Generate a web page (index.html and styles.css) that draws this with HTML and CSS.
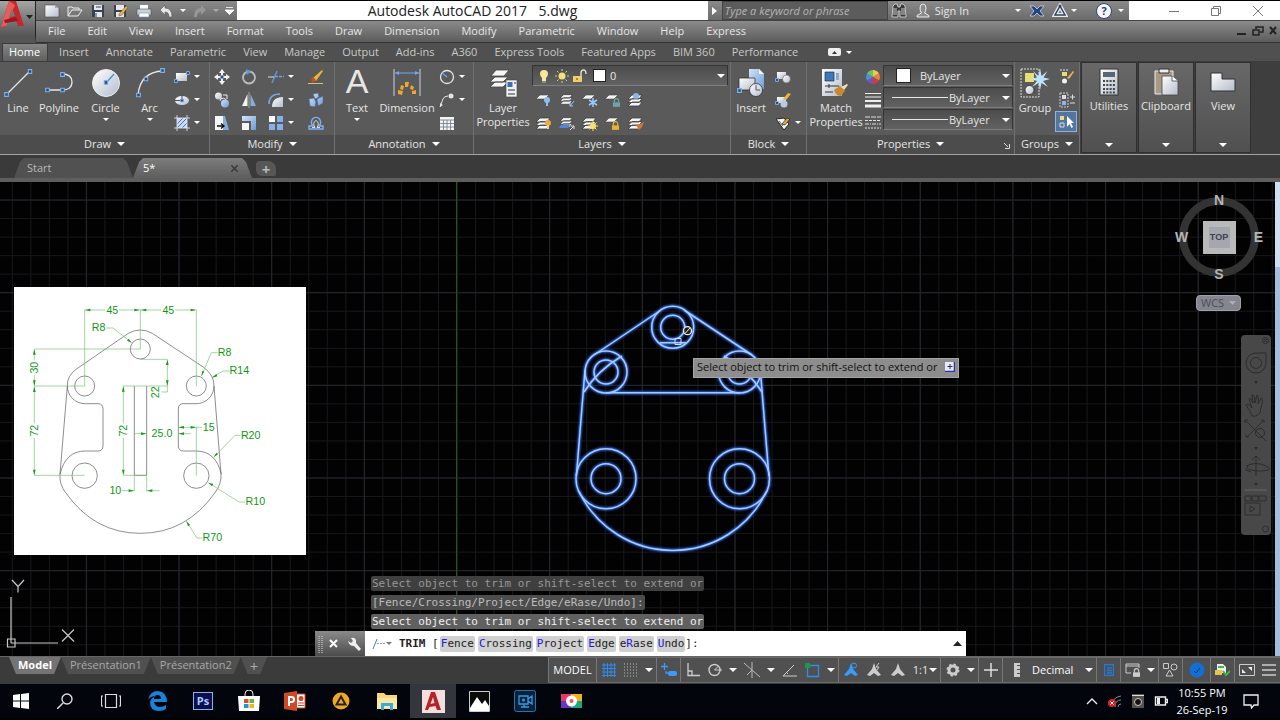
FILE: index.html
```
<!DOCTYPE html>
<html lang="en">
<head>
    <meta charset="UTF-8">
    <meta name="viewport" content="width=device-width, initial-scale=1.0">
    <title>Autodesk AutoCAD 2017 - 5.dwg</title>
    <link rel="stylesheet" href="styles.css">
</head>
<body>
    <!-- shared icon parts -->
    <svg class="defs" aria-hidden="true">
        <defs>
            <linearGradient id="metal" x1="0" y1="0" x2="1" y2="1">
                <stop offset="0" stop-color="#ffffff"/>
                <stop offset="1" stop-color="#b4bdcb"/>
            </linearGradient>
            <linearGradient id="blue" x1="0" y1="0" x2="1" y2="1">
                <stop offset="0" stop-color="#d3e4f8"/>
                <stop offset="1" stop-color="#6c9bd6"/>
            </linearGradient>
            <symbol id="node" viewBox="0 0 5 5"><path d="M.7 .7h3.6v3.6h-3.6z" fill="#33475f" stroke="#7cb0f5" stroke-width="1.2"/></symbol>
            <symbol id="stack" viewBox="0 0 18 16">
                <path d="M5 10h10l-3 4H1zM5 6.5h10l-3 4H1zM5 3h10l-3 4H1z" fill="#f4f4f4" stroke="#3c3c3c" stroke-width=".8"/>
            </symbol>
            <symbol id="sheet" viewBox="0 0 18 16"><path d="M5 3h9l-4 4H1z" fill="#f4f4f4" stroke="#444" stroke-width=".6"/></symbol>
            <symbol id="padlock" viewBox="0 0 8 10"><path d="M1.500 5V3a2.500 2.500 0 0 1 5 0v2" fill="none" stroke="currentColor" stroke-width="1.300"/><path d="M0 4.800h8V10H0z" fill="currentColor"/></symbol>
            <symbol id="person" viewBox="0 0 16 16"><path d="M8 1l2 6 5 6-3 1-4-3-4 3-3-1 5-6z" fill="currentColor"/></symbol>
        </defs>
    </svg>

    <header class="header">
        <button class="app-menu" aria-label="Application menu">
            <svg width="35" height="35" viewBox="0 0 35 35">
                <path d="M9 0h7l8 25h-6l-2-6-9 1-2 6H1z" fill="#c4272c"/>
                <path d="M9 0L1 26l5-1L15 4z" fill="#ef5a55"/>
                <path d="M12 7l3 8-6 1z" fill="#777"/>
                <path d="M4 19l12-3 2 4-13 2z" fill="#9b171d"/>
                <path d="M26 14h7l-3.500 4z" fill="#222"/>
            </svg>
        </button>
        <div class="titlebar">
            <div class="quick">
                <button aria-label="New"><svg width="16" height="14" viewBox="0 0 16 14"><path d="M1 1h10l4 3v9H1z" fill="url(#metal)" stroke="#444" stroke-width=".6"/><path d="M11 1v3h4" fill="#aaa"/></svg></button>
                <button aria-label="Open"><svg width="16" height="14" viewBox="0 0 16 14"><path d="M1 12V3h4l1 1h6v2" fill="#888" stroke="#eee"/><path d="M1 12l4-6h10l-4 6z" fill="#777" stroke="#eee"/></svg></button>
                <button aria-label="Save"><svg width="14" height="14" viewBox="0 0 14 14"><path d="M1 1h12v12H1z" fill="#39414d"/><path d="M3 1h8v5H3zM4 8h7v5H4z" fill="#e4e8ee"/><path d="M5 3h5M5 9v4" stroke="#39414d"/></svg></button>
                <button aria-label="Save as"><svg width="16" height="14" viewBox="0 0 16 14"><path d="M1 1h12v12H1z" fill="#39414d"/><path d="M3 1h8v5H3zM3 8h8v5H3z" fill="#e4e8ee"/><path d="M6 10l7-8 2 1-6 8-3 1z" fill="#e8b450" stroke="#6a4a20" stroke-width=".5"/></svg></button>
                <button aria-label="Plot"><svg width="16" height="14" viewBox="0 0 16 14"><path d="M4 1h8v5H4z" fill="#fff"/><path d="M1 5h14v6H1z" fill="#c9d2dc" stroke="#475462" stroke-width=".6"/><path d="M3 9h10v4H3z" fill="#fff" stroke="#6a8db5" stroke-width=".6"/></svg></button>
                <button aria-label="Undo"><svg width="15" height="14" viewBox="0 0 15 14"><path d="M6 1v3q7 0 7 9h-3q0-5-4-5v3L1 6z" fill="#e6e6e6" stroke="#555" stroke-width=".6"/></svg></button>
                <i class="arrow tiny"></i>
                <button aria-label="Redo"><svg width="15" height="14" viewBox="0 0 15 14"><path d="M9 1v3q-7 0-7 9h3q0-5 4-5v3l5-5z" fill="#969696"/></svg></button>
                <i class="arrow tiny dim"></i>
                <button class="narrow" aria-label="Customize"><svg width="9" height="10" viewBox="0 0 9 10"><path d="M1 1.500h7M0 4h9L4.500 8.500z" fill="#fff" stroke="#fff" stroke-width=".8"/></svg></button>
            </div>
            <h1 class="title">Autodesk AutoCAD 2017 <span>5.dwg</span></h1>
            <div class="infocenter">
                <button class="expand" aria-label="Collapse search"><svg width="5" height="8" viewBox="0 0 5 8"><path d="M0 0l5 4-5 4z" fill="#fff"/></svg></button>
                <input class="search" type="text" placeholder="Type a keyword or phrase" aria-label="Search help">
                <button aria-label="Search"><svg width="16" height="16" viewBox="0 0 16 16"><path d="M2 3l2-2h2l1 3h2l1-3h2l2 2 1 11H9V8H7v6H1z" fill="#3a3a3a" stroke="#ddd" stroke-width=".8"/><path d="M3 5v7M5 5v7M11 5v7M13 5v7" stroke="#ccc"/></svg></button>
                <button class="sign-in"><svg width="16" height="16" viewBox="0 0 16 16"><path d="M5 5q0-4 3-4t3 4q0 3-1.500 5l4.500 2.500V14H2v-1.500L6.500 10Q5 8 5 5z" fill="#8b8b8b" stroke="#eee"/></svg>Sign In</button>
                <i class="arrow tiny"></i>
                <button aria-label="Exchange apps"><svg width="16" height="14" viewBox="0 0 16 14"><path d="M1 2h4l3 3 3-3h4l-4 5 4 5h-4L8 9l-3 3H1l4-5z" fill="#25417f" stroke="#dce4f2" stroke-width=".7"/></svg></button>
                <button aria-label="Stay connected"><svg width="16" height="15" viewBox="0 0 16 15"><path d="M8 3l5 9H3z" fill="none" stroke="#e8edf5" stroke-width="4"/><path d="M8 3l5 9H3z" fill="none" stroke="#33415f" stroke-width="1.500"/><circle cx="8" cy="3" r="1.500" fill="#33415f"/></svg></button>
                <i class="arrow tiny"></i>
                <button class="help" aria-label="Help">?</button>
                <i class="arrow tiny"></i>
            </div>
            <div class="window-buttons">
                <button aria-label="Minimize"><svg width="10" height="10"><path d="M0 5.500h10" stroke="#777"/></svg></button>
                <button aria-label="Restore"><svg width="10" height="10"><path d="M.5 2.500h7v7h-7zM2.500 2V.5h7v7H8" fill="none" stroke="#777"/></svg></button>
                <button aria-label="Close"><svg width="10" height="10"><path d="M0 0l10 10M10 0L0 10" stroke="#777"/></svg></button>
            </div>
        </div>
        <nav class="menubar">
            <a href="#">File</a><a href="#">Edit</a><a href="#">View</a><a href="#">Insert</a><a href="#">Format</a><a href="#">Tools</a><a href="#">Draw</a><a href="#">Dimension</a><a href="#">Modify</a><a href="#">Parametric</a><a href="#">Window</a><a href="#">Help</a><a href="#">Express</a>
            <div class="doc-buttons">
                <button aria-label="Minimize drawing"><svg width="11" height="10"><path d="M1 8h9" stroke="#222" stroke-width="2"/></svg></button>
                <button aria-label="Restore drawing"><svg width="12" height="10"><path d="M1 4h6v5H1zM4 3V1h7v5H8" fill="none" stroke="#222" stroke-width="1.500"/></svg></button>
                <button aria-label="Close drawing"><svg width="9" height="9"><path d="M1 1l6 7M7 1L1 8" stroke="#222" stroke-width="2"/></svg></button>
            </div>
        </nav>
    </header>

    <nav class="ribbon-tabs">
        <a href="#" class="active">Home</a><a href="#">Insert</a><a href="#">Annotate</a><a href="#">Parametric</a><a href="#">View</a><a href="#">Manage</a><a href="#">Output</a><a href="#">Add-ins</a><a href="#">A360</a><a href="#">Express Tools</a><a href="#">Featured Apps</a><a href="#">BIM 360</a><a href="#">Performance</a>
        <button class="minimize" aria-label="Minimize ribbon"><svg width="13" height="8"><rect width="13" height="8" rx="2" fill="#eee"/><path d="M4 6h5L6.500 3z" fill="#333"/></svg><i class="arrow tiny"></i></button>
    </nav>

    <main class="ribbon">
        <section class="panel draw">
            <div class="tools">
                <button class="big"><svg width="30" height="30" viewBox="0 0 30 30"><path d="M4 26L27 3" stroke="#e6e6e6" stroke-width="1.300"/><use href="#node" x="1" y="24" width="5" height="5"/><use href="#node" x="24.500" y="1" width="5" height="5"/></svg>Line</button>
                <button class="big"><svg width="30" height="30" viewBox="0 0 30 30"><path d="M3 22h15q10 0 10-8t-10-8" fill="none" stroke="#e6e6e6" stroke-width="1.300"/><use href="#node" x="1" y="19.500" width="5" height="5"/><use href="#node" x="16" y="19.500" width="5" height="5"/><use href="#node" x="16" y="4" width="5" height="5"/></svg>Polyline</button>
                <button class="big"><svg width="30" height="30" viewBox="0 0 30 30"><circle cx="15" cy="15" r="13.500" fill="url(#metal)" stroke="#eee"/><path d="M15 15l8-9" stroke="#4f87cf" stroke-width="1.300"/><use href="#node" x="12.500" y="12" width="5" height="5"/></svg>Circle<i class="arrow tiny"></i></button>
                <button class="big"><svg width="30" height="30" viewBox="0 0 30 30"><path d="M3 27Q5 4 28 3" fill="none" stroke="#e6e6e6" stroke-width="1.300"/><use href="#node" x="1" y="24.500" width="5" height="5"/><use href="#node" x="8.500" y="8.500" width="5" height="5"/><use href="#node" x="25" y="0" width="5" height="5"/></svg>Arc<i class="arrow tiny"></i></button>
                <div class="small">
                    <button aria-label="Rectangle"><svg width="16" height="16" viewBox="0 0 16 16"><path d="M2 4h11v8H2z" fill="url(#metal)"/><use href="#node" x="0" y="10" width="4" height="4"/><use href="#node" x="12" y="2" width="4" height="4"/></svg><i class="arrow tiny"></i></button>
                    <button aria-label="Ellipse"><svg width="16" height="16" viewBox="0 0 16 16"><ellipse cx="8" cy="8.500" rx="7" ry="4.500" fill="url(#metal)"/><path d="M8 8.500V2M8 8.500H1" stroke="#456"/><use href="#node" x="6" y="6.500" width="4" height="4"/></svg><i class="arrow tiny"></i></button>
                    <button aria-label="Hatch"><svg width="16" height="16" viewBox="0 0 16 16"><path d="M3 3h10v10H3z" fill="#c9dbf3"/><path d="M3 9l6-6M3 13L13 3M8 13l5-5" stroke="#4675b4"/><path d="M3 0v16M13 0v16M0 3h16M0 13h16" stroke="#e9eef5" stroke-width=".8"/></svg><i class="arrow tiny"></i></button>
                </div>
            </div>
            <h2>Draw<i class="arrow"></i></h2>
        </section>

        <section class="panel modify">
            <div class="tools">
                <div class="small">
                    <button aria-label="Move"><svg width="16" height="16" viewBox="0 0 16 16"><path d="M8 0l3 4H9v2H7V4H5zM8 16l3-4H9v-2H7v2H5zM0 8l4-3v2h2v2H4v2zM16 8l-4-3v2h-2v2h2v2z" fill="#f2f2f2"/><use href="#node" x="6" y="6" width="4" height="4"/></svg></button>
                    <button aria-label="Copy"><svg width="16" height="16" viewBox="0 0 16 16"><circle cx="4.500" cy="4" r="3.500" fill="url(#metal)"/><path d="M6 9a3 3 0 1 1 2 3" stroke="#eee" fill="none"/><circle cx="11" cy="11.500" r="4" fill="url(#blue)"/><path d="M9 3h4v4" fill="none" stroke="#eee"/></svg></button>
                    <button aria-label="Stretch"><svg width="16" height="16" viewBox="0 0 16 16"><path d="M1 1h8v14H1z" fill="#f6f6f6"/><path d="M9 1h2l4 14H9z" fill="#86abd9"/><path d="M3 11h6M7 8.500l3 2.500-3 2.500" stroke="#111" stroke-width="1.400" fill="none"/></svg></button>
                </div>
                <div class="small">
                    <button aria-label="Rotate"><svg width="16" height="16" viewBox="0 0 16 16"><circle cx="8" cy="8.500" r="6" fill="none" stroke="#bcbcbc" stroke-width="1.800"/><path d="M5 0l5 2.500L6 6z" fill="#5e98e8"/></svg></button>
                    <button aria-label="Mirror"><svg width="16" height="16" viewBox="0 0 16 16"><path d="M6.500 2v12H1z" fill="#f4f4f4"/><path d="M9.500 2v12H15z" fill="#88add9"/><path d="M8 0v16" stroke="#ccc" stroke-width=".7"/></svg></button>
                    <button aria-label="Scale"><svg width="16" height="16" viewBox="0 0 16 16"><path d="M1 1h14v14H10V6H1z" fill="url(#blue)"/><path d="M1 8h7v7H1z" fill="#f6f6f6"/></svg></button>
                </div>
                <div class="small">
                    <button aria-label="Trim"><svg width="16" height="16" viewBox="0 0 16 16"><path d="M4 14L9 2" stroke="#5b95e4" stroke-width="1.500"/><path d="M0 8h6" stroke="#ddd"/><path d="M7 7.500h9" stroke="#6ea2ea" stroke-width="1.500" stroke-dasharray="3 1"/></svg><i class="arrow tiny"></i></button>
                    <button aria-label="Fillet"><svg width="16" height="16" viewBox="0 0 16 16"><path d="M4 15Q4 5 15 5v10z" fill="url(#metal)"/><path d="M1 12Q1 2 12 2" fill="none" stroke="#77a6e4" stroke-width="1.600"/></svg><i class="arrow tiny"></i></button>
                    <button aria-label="Array"><svg width="16" height="16" viewBox="0 0 16 16"><path d="M1 1h6v6H1z" fill="#fff"/><path d="M9 1h6v6H9zM1 9h6v6H1zM9 9h6v6H9z" fill="#85b1ea"/></svg><i class="arrow tiny"></i></button>
                </div>
                <div class="small">
                    <button aria-label="Erase"><svg width="16" height="16" viewBox="0 0 16 16"><path d="M5 9L14 1l1 1-7 10z" fill="#eeb339"/><path d="M3 11l2-3 3 3-3 3z" fill="#cb4d25"/><path d="M0 14.500h15" stroke="#d6c56c"/></svg></button>
                    <button aria-label="Explode"><svg width="16" height="16" viewBox="0 0 16 16"><path d="M5 2l5-1 1 4-4 2zM1 7l5-1 2 4-1 5-5-1zM9 7l6-3v7l-5 3z" fill="url(#blue)" stroke="#49688e" stroke-width=".6"/></svg></button>
                    <button aria-label="Offset"><svg width="16" height="16" viewBox="0 0 16 16"><path d="M1 14v-3h4q-3-3-.5-7a4.500 4.500 0 0 1 7 0q2.500 4-.5 7h4v3z" fill="none" stroke="#7eb1f2" stroke-width="1.400"/><path d="M4 12.500h3q-3-5 1-7 4 2 1 7h3" fill="none" stroke="#ddd"/></svg></button>
                </div>
            </div>
            <h2>Modify<i class="arrow"></i></h2>
        </section>

        <section class="panel annotation">
            <div class="tools">
                <button class="big"><span class="letter" aria-hidden="true">A</span>Text<i class="arrow tiny"></i></button>
                <button class="big"><svg width="30" height="30" viewBox="0 0 30 30"><path d="M2 1v27M28 1v27" stroke="#c9d3e0"/><path d="M3 5h24" stroke="#6ea6f2"/><path d="M3 5l4-2v4zM27 5l-4-2v4z" fill="#6ea6f2"/><g fill="#eda62f"><path d="M6 22l5 1-1 4-4-1zM9 17l3 1-1 4-3-1zM13 14h4l-1 5h-3zM19 17l3 2-1 3-3-1zM20 23l4-1v4h-4z"/></g></svg>Dimension</button>
                <div class="small">
                    <button aria-label="Radius"><svg width="16" height="16" viewBox="0 0 16 16"><circle cx="8" cy="8" r="6.500" fill="none" stroke="#e1e6ec" stroke-width="1.300"/><path d="M8 8L3 4" stroke="#6da3ee" stroke-width="1.500"/></svg><i class="arrow tiny"></i></button>
                    <button aria-label="Leader"><svg width="16" height="16" viewBox="0 0 16 16"><path d="M1 15l3-8q1-3 5-3" fill="none" stroke="#e1e6ec"/><circle cx="12" cy="4" r="2.500" fill="#e1e6ec"/><path d="M1 15v-4l3 2z" fill="#e1e6ec"/></svg><i class="arrow tiny"></i></button>
                    <button aria-label="Table"><svg width="16" height="16" viewBox="0 0 16 16"><path d="M1 2h14v13H1z" fill="#f4f4f4"/><path d="M1 5h14M1 8.500h14M1 12h14M4.500 5v10M8 5v10M11.500 5v10" stroke="#6d7785" stroke-width=".8"/></svg></button>
                </div>
            </div>
            <h2>Annotation<i class="arrow"></i></h2>
        </section>

        <section class="panel layers">
            <div class="tools">
                <button class="big"><svg width="30" height="30" viewBox="0 0 30 30"><path d="M7 14h13l-5 5H2zM7 9h13l-5 5H2zM8 2h13l-5 6H3z" fill="#f6f6f6" stroke="#444" stroke-width=".8"/><path d="M18 12h11v17H18z" fill="#f1f1f1" stroke="#444" stroke-width=".6"/><path d="M19.500 14h5v5h-5z" fill="#3a6fb5"/><path d="M26 15h2M20 22h7M20 26h7" stroke="#333"/></svg>Layer<br>Properties</button>
                <div class="layer-area">
                    <label class="combo">
                        <svg width="56" height="16" viewBox="0 0 56 16"><path d="M3 6a4 4 0 1 1 8 0q0 2-2 4v3H5v-3Q3 8 3 6z" fill="#f6e79a"/><path d="M5 14h4" stroke="#bbb"/><circle cx="25" cy="8" r="3.500" fill="#f5e07a"/><path d="M25 1v2M25 13v2M18 8h2M30 8h2M20 3l1.500 1.500M30 3l-1.500 1.500M20 13l1.500-1.500M30 13l-1.500-1.500" stroke="#d6cda5"/><path d="M36 8h9v6h-9z" fill="#f0cf68"/><path d="M44 8V5q0-3 2.500-3T49 6" fill="none" stroke="#ddd" stroke-width="1.400"/><path d="M40 10v2" stroke="#444"/></svg>
                        <span class="swatch"></span>
                        <select aria-label="Layer"><option>0</option></select><i class="arrow"></i>
                    </label>
                    <div class="layer-icons">
                        <button aria-label="Off"><svg width="18" height="16"><use href="#sheet" width="18" height="16"/><circle cx="12" cy="8" r="3" fill="#8cc0f0"/><path d="M12 10v4" stroke="#8cc0f0" stroke-width="2"/></svg></button>
                        <button aria-label="Isolate"><svg width="18" height="16"><use href="#stack" width="18" height="14"/><path d="M16 9l-4 5M12 11v3h3" stroke="#9cc4f5" fill="none"/></svg></button>
                        <button aria-label="Freeze"><svg width="18" height="16"><use href="#sheet" width="18" height="16"/><path d="M12 6v9M8 8l8 5M16 8l-8 5" stroke="#9ccaff" stroke-width="1.500"/></svg></button>
                        <button aria-label="Lock"><svg width="18" height="16" color="#6fa3a8"><use href="#sheet" width="18" height="16"/><use href="#padlock" x="9" y="6" width="7" height="9"/></svg></button>
                        <button aria-label="Make current"><svg width="18" height="16"><use href="#stack" width="18" height="16"/><circle cx="9" cy="4" r="3" fill="#8ab5ea"/></svg></button>
                        <button aria-label="Turn all on"><svg width="18" height="16"><use href="#stack" width="18" height="16"/><circle cx="13" cy="8" r="3" fill="#f2a93b"/><path d="M13 10v4" stroke="#f2d28e" stroke-width="2"/></svg></button>
                        <button aria-label="Unisolate"><svg width="18" height="16"><use href="#stack" width="18" height="14"/><path d="M3 10h9l-2 3H1z" fill="#4a88dd"/><path d="M12 15l4-4M13 11h3v3" stroke="#ddd" fill="none"/></svg></button>
                        <button aria-label="Thaw all"><svg width="18" height="16"><use href="#stack" width="18" height="16"/><circle cx="12" cy="11" r="3" fill="#f7e06d"/><path d="M12 6v10M7 11h10M8.500 7.500l7 7M15.500 7.500l-7 7" stroke="#f7e06d"/></svg></button>
                        <button aria-label="Unlock"><svg width="18" height="16" color="#e4b434"><use href="#sheet" width="18" height="16"/><use href="#padlock" x="8" y="6" width="7" height="9"/></svg></button>
                        <button aria-label="Match layer"><svg width="18" height="16"><use href="#stack" width="18" height="16"/><path d="M9 10l4-1 4-2-2 5-3 3z" fill="#ce7837"/></svg></button>
                    </div>
                </div>
            </div>
            <h2>Layers<i class="arrow"></i></h2>
        </section>

        <section class="panel block">
            <div class="tools">
                <button class="big"><svg width="30" height="30" viewBox="0 0 30 30"><path d="M13 1h10l5 5v15H13z" fill="url(#blue)"/><path d="M23 1v5h5" fill="#eef5ff"/><path d="M3 10h16v12H3z" fill="url(#metal)" stroke="#333" stroke-width=".8"/><circle cx="20" cy="22" r="6.500" fill="url(#metal)" stroke="#333" stroke-width=".8"/><path d="M20 22v-5M20 22h4" stroke="#556"/><use href="#node" x="1" y="20" width="5" height="5"/></svg>Insert</button>
                <div class="small">
                    <button aria-label="Create block"><svg width="16" height="16" viewBox="0 0 16 16"><path d="M2 3h9v7H2z" fill="url(#metal)"/><circle cx="11.500" cy="10" r="4" fill="url(#metal)" stroke="#555" stroke-width=".6"/><use href="#node" x="0" y="9" width="4" height="4"/></svg></button>
                    <button aria-label="Edit block"><svg width="16" height="16" viewBox="0 0 16 16"><path d="M2 5h9v6H2z" fill="url(#metal)"/><circle cx="9" cy="12" r="3.500" fill="#b9cbe2"/><path d="M8 7l5-6 3 1-5 6z" fill="#efb343"/><use href="#node" x="0" y="9" width="4" height="4"/></svg></button>
                    <button aria-label="Edit attributes"><svg width="16" height="16" viewBox="0 0 16 16"><path d="M1 4l8-1 5 6-5 6z" fill="#f4f4f4" stroke="#222"/><path d="M4 6l4 5M7 9l5-6 3 1-5 6z" stroke="#222" stroke-width=".7" fill="#e6a83e"/></svg><i class="arrow tiny"></i></button>
                </div>
            </div>
            <h2>Block<i class="arrow"></i></h2>
        </section>

        <section class="panel properties">
            <div class="tools">
                <button class="big"><svg width="30" height="30" viewBox="0 0 30 30"><path d="M1 1h20v27H1z" fill="url(#metal)"/><path d="M4 4h9v9H4z" fill="#3d77bd" stroke="#222" stroke-width=".6"/><path d="M15 5h3v7h-3z" fill="#89abd0"/><path d="M4 18h14M8 16v4M4 24h8" stroke="#333"/><path d="M13 22l6-4 5 5-4 5q-5 0-7-6z" fill="#c98634"/><path d="M20 19l6-3 1 1-4 5z" fill="#f0dfae"/></svg>Match<br>Properties</button>
                <div class="small prop-icons">
                    <svg width="16" height="16" viewBox="0 0 16 16"><path d="M8 8V1a7 7 0 0 1 6 3.500z" fill="#f2c84b"/><path d="M8 8l6-3.500a7 7 0 0 1 0 7z" fill="#e5853a"/><path d="M8 8l6 3.500A7 7 0 0 1 8 15z" fill="#cf3a44"/><path d="M8 8v7a7 7 0 0 1-6-3.500z" fill="#7c4fb5"/><path d="M8 8l-6 3.500a7 7 0 0 1 0-7z" fill="#4a8fe0"/><path d="M8 8L2 4.500A7 7 0 0 1 8 1z" fill="#6dc06d"/></svg>
                    <svg width="16" height="16" viewBox="0 0 16 16"><path d="M0 1.500h16M0 5h16" stroke="#eee"/><path d="M0 9h16" stroke="#eee" stroke-width="2"/><path d="M0 14h16" stroke="#eee" stroke-width="3"/></svg>
                    <svg width="16" height="16" viewBox="0 0 16 16"><path d="M0 2h16" stroke="#ddd" stroke-dasharray="5 1"/><path d="M0 5.500h16" stroke="#ddd" stroke-dasharray="3 1"/><path d="M0 9h16" stroke="#ddd" stroke-dasharray="4 1 1 1"/><path d="M0 13h16" stroke="#ddd" stroke-dasharray="2 1"/></svg>
                </div>
                <div class="combos">
                    <label class="combo"><span class="swatch"></span><select aria-label="Object color"><option>ByLayer</option></select><i class="arrow"></i></label>
                    <label class="combo"><span class="rule"></span><select aria-label="Lineweight"><option>ByLayer</option></select><i class="arrow"></i></label>
                    <label class="combo"><span class="rule"></span><select aria-label="Linetype"><option>ByLayer</option></select><i class="arrow"></i></label>
                </div>
            </div>
            <h2>Properties<i class="arrow"></i><svg class="launcher" width="6" height="6"><path d="M0 0l4 4M5.500 1v4.500H1" fill="none" stroke="#ddd"/></svg></h2>
        </section>

        <section class="panel groups">
            <div class="tools">
                <button class="big"><svg width="30" height="30" viewBox="0 0 30 30"><path d="M1 1h18v28H1z" fill="none" stroke="#ddd" stroke-dasharray="2 1"/><path d="M5 5h9v9H5z" fill="#e5df75"/><circle cx="9.500" cy="22" r="4.500" fill="url(#metal)" stroke="#222" stroke-width=".8"/><path d="M20 0l1.500 8 6-5-4 6.500L30 11l-7 2 5 6-6.500-4L20 22l-1.500-7-6.500 4 5-6-7-2 7-1.500L13 3l5.500 5z" fill="#bfe2fb"/></svg>Group</button>
                <div class="small">
                    <button aria-label="Ungroup"><svg width="16" height="16" viewBox="0 0 16 16"><path d="M1 1h9" stroke="#ddd" stroke-dasharray="2 1"/><path d="M3 3h5v4H3z" fill="#e5df75"/><circle cx="5.500" cy="12" r="2.500" fill="#f1f1f1"/><path d="M8 9l6-7 1 1-5 7z" fill="#e7b653"/></svg></button>
                    <button aria-label="Group edit"><svg width="16" height="16" viewBox="0 0 16 16"><path d="M1 1h8v14H1z" fill="none" stroke="#ccc" stroke-dasharray="2 1"/><path d="M3 3h4v4H3z" fill="#ddd"/><path d="M3 9h4v4H3z" fill="#8cb4e8"/><path d="M11 5h5M13.500 2.500v5M11 11h5" stroke="#ddd"/></svg></button>
                    <button class="on" aria-label="Group selection"><svg width="16" height="16" viewBox="0 0 16 16"><path d="M2 2h4v4H2z" fill="#e5df75"/><path d="M2 9h4v4H2z" fill="none" stroke="#ddd"/><path d="M9 2v11l2.500-3 2 4 1.500-1-2-4h3z" fill="#fff"/></svg></button>
                </div>
            </div>
            <h2>Groups<i class="arrow"></i></h2>
        </section>

        <button class="folded"><svg width="28" height="28" viewBox="0 0 28 28"><path d="M5 1h18v26H5z" fill="url(#metal)" stroke="#333"/><path d="M8 4h12v5H8z" fill="#596675"/><path d="M8 13h12M8 17h12M8 21h12M8 24.500h12" stroke="#444" stroke-width="2" stroke-dasharray="2 1.300"/></svg>Utilities<i class="arrow"></i></button>
        <button class="folded"><svg width="28" height="28" viewBox="0 0 28 28"><path d="M3 3h18v23H3z" fill="#a99a86" stroke="#eee"/><path d="M7 1h10v4H7z" fill="#eee" stroke="#333"/><path d="M10 8h10l6 5v14H10z" fill="url(#metal)" stroke="#444" stroke-width=".8"/><path d="M20 8v5h6" fill="#fff" stroke="#444" stroke-width=".8"/></svg>Clipboard<i class="arrow"></i></button>
        <button class="folded"><svg width="28" height="28" viewBox="0 0 28 28"><path d="M2 5h11v6h13v12H2z" fill="url(#metal)" stroke="#333"/></svg>View<i class="arrow"></i></button>
    </main>

    <nav class="doc-tabs">
        <a href="#" class="doc-tab">Start</a>
        <a href="#" class="doc-tab current">5*<svg width="7" height="7"><path d="M0 0l7 7M7 0L0 7" stroke="#3b3b3b" stroke-width="1.500"/></svg></a>
        <button class="add" aria-label="New drawing">+</button>
    </nav>

    <section class="canvas">
        <svg class="drawing" viewBox="0 182 1280 474" preserveAspectRatio="xMinYMin slice">
            <defs>
                <pattern id="minor" x="456.500" y="292.200" width="18.530" height="18.530" patternUnits="userSpaceOnUse"><path d="M0 .5h19M.5 0v19" stroke="#16171b" fill="none"/></pattern>
                <pattern id="major" x="456.500" y="292.200" width="92.650" height="92.650" patternUnits="userSpaceOnUse"><path d="M0 .5h93M.5 0v93" stroke="#25272d" fill="none"/></pattern>
            </defs>
            <rect y="182" width="1280" height="474" fill="url(#minor)"/>
            <rect y="182" width="1280" height="474" fill="url(#major)"/>
            <path d="M456.500 182v474" stroke="#24532a"/>

            <g class="shape">
                <circle cx="672.700" cy="327.300" r="21"/><circle cx="672.700" cy="327.300" r="12"/>
                <circle cx="606" cy="372" r="21"/><circle cx="606" cy="372" r="12"/>
                <circle cx="739.500" cy="372" r="21"/><circle cx="739.500" cy="372" r="12"/>
                <circle cx="606" cy="478.700" r="30"/><circle cx="606" cy="478.700" r="15"/>
                <circle cx="739.500" cy="478.700" r="30"/><circle cx="739.500" cy="478.700" r="15"/>
                <path d="M661 310L594 355M684 310l68 45M585 370l-8.600 106M760.300 370l8.600 106"/>
                <path d="M579 491.500A104 104 0 0 0 766.500 491.500"/>
                <path d="M606 392.700h134M660 342.700h26"/>
                <path d="M622 356Q598 370 584 392M724 356q24 14 38 36"/>
            </g>
            <path d="M675 338.500h6v6h-6z" class="pick"/>
            <circle cx="687.500" cy="330.700" r="4" class="forbid"/><path d="M690 328l-5 5.500" stroke="#f6f3d8"/>

            <g class="ucs">
                <path d="M7.500 639h7.500v8H7.500zM11 643V597M11 643h47"/>
                <path d="M12 580l6 6.500 6-6.500M18 586.500v6M62 629.500l12 12M74 629.500l-12 12"/>
            </g>
        </svg>

        <!-- dimensioned sketch -->
        <svg class="sketch" viewBox="43 19 876 804">
            <g class="outline">
                <path d="M386 158Q422 138 458 158L612 260Q644 284 643 316L664 580Q666 610 646 636Q560 758 422 758T198 636Q178 610 181 580L203 316Q202 284 232 264z"/>
                <circle cx="422" cy="205" r="30"/><circle cx="255" cy="316" r="30"/><circle cx="590" cy="316" r="30"/>
                <circle cx="255" cy="585" r="38"/><circle cx="590" cy="585" r="38"/>
                <path d="M203 316a53 53 0 0 0 54 53h38q15 0 15 16v110q0 16-15 16h-38q-60 0-76 70"/>
                <path d="M643 316a53 53 0 0 1-54 53h-38q-15 0-15 16v110q0 16 15 16h38q60 0 76 70"/>
                <path d="M404 316v268M441 316v268M404 584h37"/>
            </g>
            <g class="dims">
                <path d="M255 88h62M358 88h127M526 88h64M255 88v228M422 88v117M590 88v228M104 205h318M104 316h151M104 584h151M104 205v34M104 282v34M104 316v112M104 472v112"/>
                <path d="M371 316v112M371 472v112M371 316h132M371 584h70M404 584v48M441 584v48M366 630h38M441 630h38M422 236h81v80M503 316v18h-18M404 459h37M536 440h72M536 459h38M590 440v145"/>
                <path d="M320 142h20l56 44M654 216h-19l-30 70M690 271h-20l-33 20M722 464h-16l-64 66M736 664h-18l-92-58M608 772h-16l-32-50"/>
            </g>
            <g class="heads">
                <path d="M256 88l16-4v8zM420 88l-16-4v8zM424 88l16-4v8zM589 88l-16-4v8zM104 206l-4 16h8zM104 315l-4-16h8zM104 318l-4 16h8zM104 583l-4-16h8zM371 317l-4 16h8zM371 583l-4-16h8zM503 237l-4 16h8zM503 315l-4-16h8z"/>
                <path d="M403 630l-16-4v8zM442 630l16-4v8zM440 459l-16-4v8zM537 440l16-4v8zM589 440l-16-4v8zM537 459l16-4v8zM396 186l-9-12-5 6zM605 286l3-16 6 3zM637 291l13-11 3 7zM642 530l8-14 5 5zM626 606l15 4-4 7zM560 722l11 10-6 5z"/>
            </g>
            <g class="labels">
                <text x="338" y="99">45</text><text x="506" y="99">45</text><text x="297" y="152">R8</text><text x="675" y="226">R8</text>
                <text x="719" y="281">R14</text><text x="627" y="450">15</text><text x="487" y="470">25.0</text><text x="753" y="475">R20</text>
                <text x="347" y="641">10</text><text x="767" y="674">R10</text><text x="638" y="782">R70</text>
                <text transform="translate(115 261) rotate(-90)">30</text><text transform="translate(115 450) rotate(-90)">72</text>
                <text transform="translate(382 450) rotate(-90)">72</text><text transform="translate(479 335) rotate(-90)">22</text>
            </g>
        </svg>

        <div class="prompt">Select object to trim or shift-select to extend or <svg width="10" height="10"><path d="M0 0h10v10H0z" fill="#e8e8ff"/><path d="M9.500 0v9.500H0" stroke="#2633b8" stroke-width="1.500" fill="none"/><path d="M5 2v5M2.500 4.500h5" stroke="#333"/></svg></div>

        <div class="viewcube">
            <span class="north">N</span><span class="west">W</span><button class="top">TOP</button><span class="east">E</span><span class="south">S</span>
        </div>
        <button class="wcs">WCS <svg width="7" height="5"><path d="M0 0h7L3.500 4z" fill="#aeaebc"/></svg></button>
        <div class="navbar">
            <svg width="30" height="200" viewBox="0 0 30 200">
                <g fill="none" stroke="#2c2c2c" stroke-width="1">
                    <circle cx="24.500" cy="5.500" r="3"/><path d="M23 4l3 3M26 4l-3 3"/>
                    <path d="M5 28a10 10 0 1 0 20 0V18H15a10 10 0 0 0-10 10z"/><circle cx="15" cy="28" r="5.500"/>
                    <path d="M9 76q-5-6-3-7t5 4l-3-9q2-2 4 4l-1-8q3-1 3 8l2-8q2 0 1 9l3-6q2 0 1 5l-2 10-4 3H11z"/>
                    <path d="M5 86l20 20M22 86L6 102M4 88v-3h3M20 85h3v3M5 99v3h3"/><circle cx="19" cy="98" r="4.500"/>
                    <path d="M15 121v20M5 131q10-5 20 0t-10 5l-8-2M11 125l4-4 4 4M7 131l-2 4 5 2"/>
                    <path d="M4 161h6v5H4zM11 161h6v5h-6zM18 161h7v5h-7zM4 168h15v12H4zM9 171v6l5-3z"/><circle cx="24.500" cy="194" r="3"/>
                </g>
                <path d="M13 46h4l-2 3zM13 112h4l-2 3zM13 148h4l-2 3z" fill="#2c2c2c"/><path d="M4 155h22" stroke="#666"/>
            </svg>
        </div>
        <div class="scrollbar"></div>

        <div class="command">
            <div class="history">
                <p class="old">Select object to trim or shift-select to extend or</p>
                <p class="mid">[Fence/Crossing/Project/Edge/eRase/Undo]:</p>
                <p>Select object to trim or shift-select to extend or</p>
            </div>
            <form class="cmdline">
                <div class="grip">
                    <svg width="5" height="18"><path d="M1 1v17M4 1v17" stroke="#ddd" stroke-dasharray="1 1"/></svg>
                    <button type="button" aria-label="Close command line"><svg width="9" height="9"><path d="M1 1l7 7M8 1L1 8" stroke="#fff" stroke-width="2"/></svg></button>
                    <button type="button" aria-label="Customize command line"><svg width="14" height="14" viewBox="0 0 14 14"><path d="M1 4l3 2 2-2-2-3q4-1 5 2v3l5 6-2 2-5-5Q2 9 1 4z" fill="#eee"/></svg></button>
                </div>
                <svg class="cmd-icon" width="20" height="12" viewBox="0 0 20 12"><path d="M1 11L5 1" stroke="#4a7fc8"/><path d="M5 5.500h8" stroke="#7ea4d4" stroke-dasharray="2 1"/><path d="M14 4h6l-3 3z" fill="#777"/></svg>
                <label for="cmd"><b>TRIM</b> [</label>
                <div class="options"><button type="button"><b>F</b>ence</button><button type="button"><b>C</b>rossing</button><button type="button"><b>P</b>roject</button><button type="button"><b>E</b>dge</button><button type="button">e<b>R</b>ase</button><button type="button"><b>U</b>ndo</button></div>
                <span>]:</span>
                <input id="cmd" type="text">
                <svg class="up" width="9" height="5"><path d="M0 5h9L4.500 0z" fill="#222"/></svg>
            </form>
        </div>
    </section>

    <footer class="bottombar">
        <nav class="layouts">
            <a href="#" class="current">Model</a><a href="#">Présentation1</a><a href="#">Présentation2</a><button aria-label="New layout">+</button>
        </nav>
        <div class="status">
            <button class="model">MODEL</button>
            <button class="first" aria-label="Grid"><svg width="14" height="14"><path d="M2 0v14M5.500 0v14M9 0v14M12.500 0v14M0 2h14M0 5.500h14M0 9h14M0 12.500h14" stroke="#2c8df0"/></svg></button>
            <button class="s" aria-label="Snap"><svg width="14" height="14"><path d="M0 1h14M0 4h14M0 7h14M0 10h14M0 13h14" stroke="#bbb" stroke-dasharray="1 2"/></svg></button>
            <button class="drop" aria-label="Snap options"><i class="arrow"></i></button>
            <button class="first" aria-label="Infer constraints"><svg width="16" height="14"><path d="M3.500 0v7M0 3.500h7M5 8v2h2" stroke="#3b9bf8" stroke-width="1.300" fill="none"/><rect x="7" y="8" width="9" height="5" rx="2" fill="#3b9bf8"/></svg></button>
            <button class="first" aria-label="Ortho"><svg width="14" height="14"><path d="M2 0v12.500h12M2 8h4v4" stroke="#ccc" fill="none" stroke-width="1.300"/></svg></button>
            <button class="s" aria-label="Polar"><svg width="14" height="14"><circle cx="6.500" cy="7" r="5.500" stroke="#ccc" fill="none" stroke-width="1.400"/><path d="M6.500 7H14M6.500 7l4-4" stroke="#ccc"/></svg></button>
            <button class="drop" aria-label="Polar options"><i class="arrow"></i></button>
            <button aria-label="Isodraft"><svg width="16" height="16"><path d="M0 1l16 14M8 0v16M3 13l5-5" stroke="#bbb"/></svg></button>
            <button class="drop" aria-label="Isodraft options"><i class="arrow"></i></button>
            <button class="s" aria-label="Object tracking"><svg width="15" height="13"><path d="M1 12L12 1M1 12h14M4 8l2 2" stroke="#ccc"/></svg></button>
            <button aria-label="Object snap"><svg width="15" height="15"><path d="M2.500 2.500h11v11h-11z" fill="none" stroke="#2c8df0" stroke-width="1.300"/><path d="M0 0h5v5H0z" fill="#1b9c3c"/></svg></button>
            <button class="drop" aria-label="Object snap options"><i class="arrow"></i></button>
            <button class="first" aria-label="Annotation visibility"><svg width="16" height="16" color="#379bff"><use href="#person" width="16" height="16"/><circle cx="11" cy="3.500" r="2.500" fill="none" stroke="#379bff"/></svg></button>
            <button aria-label="Auto scale"><svg width="16" height="16" color="#ccc"><use href="#person" width="16" height="16"/><path d="M13 1l-3 4h3l-2 3" stroke="#ccc" fill="none"/></svg></button>
            <button aria-label="Annotation scale"><svg width="16" height="16" color="#ccc"><use href="#person" width="16" height="16"/></svg></button>
            <button class="scale">1:1<i class="arrow"></i></button>
            <button class="first" aria-label="Workspace"><svg width="14" height="14"><circle cx="7" cy="7" r="4" fill="none" stroke="#ccc" stroke-width="3"/><circle cx="7" cy="7" r="5.500" fill="none" stroke="#ccc" stroke-width="2" stroke-dasharray="2.200 2.100"/></svg></button>
            <button class="drop" aria-label="Workspace options"><i class="arrow"></i></button>
            <button class="first" aria-label="Annotation monitor"><svg width="14" height="14"><path d="M7 0v14M0 7h14" stroke="#ddd" stroke-width="1.500"/></svg></button>
            <button class="first l" aria-label="Units"><svg width="6" height="14"><path d="M0 0h6v2H3v1h3v3H3v1h3v3H3v1h3v3H0z" fill="#ccc"/></svg></button>
            <label class="units"><select aria-label="Drawing units"><option>Decimal</option></select><i class="arrow"></i></label>
            <button class="first" aria-label="Quick properties"><svg width="10" height="12"><path d="M.5 .5h9v11h-9zM3 4h5M3 6.500h5M3 9h5" stroke="#2378d8" fill="none" stroke-width="1.300"/></svg></button>
            <button class="first" aria-label="Lock UI"><svg width="16" height="14" color="#ccc"><path d="M6 10H1V1h13v4M1 3h13" stroke="#ccc" fill="none"/><use href="#padlock" x="8" y="5" width="7" height="9"/></svg></button>
            <button class="drop" aria-label="Lock UI options"><i class="arrow"></i></button>
            <button class="first" aria-label="Isolate objects"><svg width="15" height="14"><path d="M.5 .5h5v5h-5zM3 13l3.500-6 3.500 6z" stroke="#ccc" fill="none"/><circle cx="11" cy="4" r="3" stroke="#ccc" fill="none"/></svg></button>
            <button class="first l" aria-label="Hardware acceleration"><svg width="16" height="16"><circle cx="8" cy="8" r="7.500" fill="#126fd6"/><path d="M5 9l2 2 4-5" stroke="#06315f" fill="none"/></svg></button>
            <button class="first" aria-label="Trusted DWG"><svg width="15" height="14"><path d="M2 1h6l3 3v6H2z" fill="#e7f1fb"/><path d="M0 7h7v5H0z" fill="#e6c54a"/><path d="M8 8l3 4 4-4M3 4h6" stroke="#4ab43f" stroke-width="2" fill="none"/></svg></button>
            <button class="first" aria-label="Clean screen"><svg width="16" height="12"><path d="M.5 .5h15v11H.5z" stroke="#ccc" fill="none"/><path d="M3 9V5l4 4zM13 3v4L9 3z" fill="#eee"/></svg></button>
            <button class="s" aria-label="Customization"><svg width="14" height="12"><path d="M0 1h14M0 6h14M0 11h14" stroke="#ccc" stroke-width="1.500"/></svg></button>
        </div>
    </footer>

    <div class="taskbar">
        <button class="start" aria-label="Start"><svg width="16" height="16"><path d="M0 2l7-1v6.500H0zM8 1l8-1v7.500H8zM0 8.500h7V15l-7-1zM8 8.500h8V16l-8-1z" fill="#fff"/></svg></button>
        <button aria-label="Search"><svg width="16" height="16"><circle cx="10" cy="6" r="5" fill="none" stroke="#ddd" stroke-width="1.400"/><path d="M6 10l-6 6" stroke="#ddd" stroke-width="1.500"/></svg></button>
        <button aria-label="Task view"><svg width="20" height="16"><path d="M4.500 1.500h11v13h-11zM2 3H.5v10H2M18 3h1.500v10H18" fill="none" stroke="#ddd" stroke-width="1.200"/></svg></button>
        <button aria-label="Edge"><svg width="20" height="20" viewBox="0 0 20 20"><path d="M1 9Q3 0 11 0q9 1 9 11H7q1 5 6 5 3 0 6-2v4q-3 2-7 2-9 0-9-9 1-4 6-6-6 0-8 4zM7 8h7q0-4-3.500-4T7 8z" fill="#1683dd" fill-rule="evenodd"/></svg></button>
        <button aria-label="Photoshop"><span class="ps">Ps</span></button>
        <button aria-label="Store"><svg width="22" height="22" viewBox="0 0 22 22"><path d="M7 7V4a4 4 0 0 1 8 0v3" stroke="#eee" fill="none"/><path d="M0 6h22l-1 15H1z" fill="#fff"/><path d="M6 9h4.500v4H6z" fill="#e34c26"/><path d="M11.500 9H16v4h-4.500z" fill="#6cb33e"/><path d="M6 14h4.500v4H6z" fill="#1c9ad6"/><path d="M11.500 14H16v4h-4.500z" fill="#f3b51b"/></svg></button>
        <button aria-label="PowerPoint"><svg width="22" height="20" viewBox="0 0 22 20"><path d="M12 3h9v14h-9z" fill="#fff" stroke="#cf4526"/><path d="M14 12h6M14 14.500h6" stroke="#cf4526"/><circle cx="17" cy="7.500" r="2.500" fill="#cf4526"/><path d="M0 2l13-2v20L0 18z" fill="#d24726"/><path d="M5 15V6h2.500a2.500 2.500 0 0 1 0 5H5" fill="none" stroke="#fff" stroke-width="2"/></svg></button>
        <button aria-label="AIMP"><svg width="18" height="18"><circle cx="9" cy="9" r="8.500" fill="#f0a722"/><path d="M9 4.500l4.500 8h-9z" fill="none" stroke="#222" stroke-width="2"/></svg></button>
        <button aria-label="File Explorer"><svg width="20" height="18"><path d="M0 1h7l2 2h11v14H0z" fill="#f5d879"/><path d="M0 6h20v11H0z" fill="#fbe7a1"/><path d="M4 18v-7h12v7h-3v-4H7v4z" fill="#3aa9dc"/></svg></button>
        <button class="running" aria-label="AutoCAD"><svg width="23" height="23" viewBox="0 0 23 23"><path d="M0 0h23v23H0z" fill="#f3dfdd"/><path d="M9 2h4l6 18h-4l-1.500-4-6 1L6 20H3zM11 7l-2.500 7 4-1z" fill="#b52228" fill-rule="evenodd"/></svg></button>
        <button aria-label="Photos"><svg width="21" height="21"><path d="M.5 .5h20v20H.5z" fill="#0a0a0a" stroke="#ccc"/><path d="M1 17l7-11 5 7 3-4 4 6v5H1z" fill="#fff"/></svg></button>
        <button aria-label="Recorder"><svg width="22" height="22"><rect x=".5" y=".5" width="21" height="21" rx="2" fill="#0b2036" stroke="#1f76b5"/><path d="M5 6h9v8H5zM14 9l4-3v8l-4-3M7 17h8M10 14v3" stroke="#2f9de8" fill="none" stroke-width="1.300"/><circle cx="9.500" cy="10" r="1.500" fill="#2f9de8"/></svg></button>
        <button aria-label="Screen recorder"><svg width="21" height="14"><path d="M0 0h10v7H0z" fill="#e9376a"/><path d="M10 0h11v7H10z" fill="#f2b01f"/><path d="M0 7h10v7H0z" fill="#6338c6"/><path d="M10 7h11v7H10z" fill="#19a982"/><circle cx="10.500" cy="7" r="5.500" fill="#fff"/><circle cx="10.500" cy="7" r="2" fill="#e9546a"/></svg></button>
        <div class="tray">
            <button aria-label="Show hidden icons"><svg width="12" height="8"><path d="M1 7l5-5 5 5" stroke="#eee" fill="none" stroke-width="1.300"/></svg></button>
            <button aria-label="Network"><svg width="14" height="14"><path d="M4 13Q4 3 13 2M7 13q0-7 6-7M10 13q0-3 3-3" stroke="#888" fill="none"/><circle cx="4" cy="9" r="4" fill="#d9232b"/><path d="M2.500 7.500l3 3M5.500 7.500l-3 3" stroke="#fff"/></svg></button>
            <button aria-label="Audio"><svg width="12" height="14"><path d="M0 0h12v14H0z" fill="#56524e"/><path d="M0 1.500h12" stroke="#ddd"/><circle cx="6" cy="8" r="3.500" fill="#111" stroke="#ccc"/></svg></button>
            <button aria-label="Battery"><svg width="14" height="10"><path d="M1.500 1h10v8h-10zM12 3.500h1.500v3H12" stroke="#eee" fill="none" stroke-width="1.400"/><path d="M3 2h3v6H3z" fill="#eee"/></svg></button>
            <button class="clock">10:55 PM<br>26-Sep-19</button>
            <button class="notify" aria-label="Notifications"><svg width="16" height="15"><path d="M1 1h14v10h-4l-2.500 3L8 11H1z" stroke="#eee" fill="none" stroke-width="1.300"/></svg></button>
        </div>
    </div>
</body>
</html>
```
FILE: styles.css
```
* {
    box-sizing: border-box;
}

body {
    margin: 0;
    height: 100vh;
    display: flex;
    flex-direction: column;
    overflow: hidden;
    font-family: "Open Sans", "Noto Sans", sans-serif;
    font-size: 11px;
    line-height: 14px;
    color: #e6e6e6;
    background: #3b3b3b;
}

button,
input,
select {
    font: inherit;
    color: inherit;
    background: none;
    border: 0;
    padding: 0;
    margin: 0;
    outline: none;
}

select {
    appearance: none;
}

a {
    color: inherit;
    text-decoration: none;
}

svg {
    display: block;
    flex: none;
}

.defs {
    position: absolute;
    width: 0;
    height: 0;
}

.arrow {
    display: inline-block;
    flex: none;
    border: 4px solid transparent;
    border-top-color: #fff;
    border-bottom: 0;
}

.arrow.tiny {
    border-width: 3px;
    border-bottom: 0;
}

.arrow.dim {
    border-top-color: #aaa;
}

/* title and menu */
.header {
    display: grid;
    grid-template-columns: 36px 1fr;
    grid-template-rows: 20px 22px;
    border-top: 1px solid #000;
}

.app-menu {
    grid-row: span 2;
    display: flex;
    align-items: flex-start;
    background: linear-gradient(#a5a5a5, #555);
    border-right: 1px solid #222;
    border-bottom: 7px solid #555;
    overflow: hidden;
}

.titlebar {
    display: flex;
    background: #fff;
    border-bottom: 1px solid #444;
}

.quick,
.infocenter {
    display: flex;
    align-items: center;
    background: linear-gradient(#8a8a8a, #6b6b6b);
}

.quick {
    width: 201px;
    padding-left: 4px;
}

.quick button {
    width: 23px;
    display: flex;
    justify-content: center;
}

.quick .arrow {
    margin: 0 2px;
}

.quick .narrow {
    width: 16px;
}

.title {
    flex: 1;
    margin: 0;
    text-align: center;
    font-size: 14px;
    line-height: 19px;
    font-weight: 400;
    color: #222;
}

.title span {
    margin-left: 8px;
}

.infocenter {
    width: 421px;
}

.infocenter button {
    width: 23px;
    display: flex;
    justify-content: center;
    align-items: center;
}

.infocenter .expand {
    width: 14px;
}

.search {
    width: 168px;
    height: 19px;
    padding: 0 2px;
    background: #5c5c5c;
    border: 1px solid #444;
    font-style: italic;
}

.search::placeholder {
    color: #b5b5b5;
}

.infocenter .sign-in {
    width: 102px;
    padding-left: 4px;
    margin-right: 3px;
    justify-content: flex-start;
    gap: 4px;
}

.infocenter .arrow {
    margin-right: 5px;
}

.infocenter .help {
    width: 16px;
    height: 16px;
    margin: 0 6px 0 14px;
    border-radius: 8px;
    background: #f5f7fa;
    border: 1px solid #35456a;
    color: #24407c;
    font-weight: 700;
}

.window-buttons {
    display: flex;
    width: 151px;
    padding-left: 24px;
}

.window-buttons button {
    width: 42px;
    display: flex;
    align-items: center;
    justify-content: center;
}

.menubar {
    display: flex;
    align-items: center;
    gap: 22px;
    padding: 0 2px 2px 12px;
    background: linear-gradient(#8a8a8a, #5c5c5c);
    border-bottom: 1px solid #333;
}

.doc-buttons {
    margin-left: auto;
    display: flex;
    align-items: center;
    gap: 5px;
}

.ribbon-tabs {
    display: flex;
    height: 18px;
    padding-left: 2px;
    background: #505050;
    color: #c8c8c8;
}

.ribbon-tabs a {
    padding: 1px 8px 0 9px;
    line-height: 16px;
}

.ribbon-tabs .active {
    padding: 1px 7px 0 6px;
    margin-right: 2px;
    background: linear-gradient(#858585, #606060);
    border: 1px solid #3c3c3c;
    border-bottom: 0;
    color: #fff;
    line-height: 14px;
}

.minimize {
    display: flex;
    align-items: center;
    gap: 5px;
    margin-left: 22px;
}

/* ribbon */
.ribbon {
    display: flex;
    height: 94px;
    border-top: 1px solid #3c3c3c;
    border-bottom: 1px solid #a2a2a2;
    background: #3e3e3e;
}

.panel {
    display: flex;
    flex-direction: column;
    border-right: 1px solid #707070;
    background: #5a5a5a;
}

.tools {
    display: grid;
    height: 73px;
    padding-top: 3px;
    align-items: start;
}

.panel h2 {
    flex: 1;
    display: flex;
    align-items: center;
    justify-content: center;
    gap: 6px;
    margin: 0;
    padding-bottom: 2px;
    font-size: 11px;
    font-weight: 400;
    background: #4c4c4c;
    position: relative;
}

.launcher {
    position: absolute;
    right: 4px;
    bottom: 5px;
}

.draw {
    width: 210px;
}

.draw .tools {
    grid-template-columns: 36px 46px 47px 41px 40px;
}

.modify {
    width: 125px;
}

.modify .tools {
    grid-template-columns: 27px 27px 40px 27px;
}

.annotation {
    width: 139px;
}

.annotation .tools {
    grid-template-columns: 44px 56px 38px;
}

.layers {
    width: 257px;
}

.layers .tools {
    grid-template-columns: 58px 196px;
}

.block {
    width: 76px;
}

.block .tools {
    grid-template-columns: 40px 36px;
}

.properties {
    width: 208px;
}

.properties .tools {
    grid-template-columns: 58px 18px 130px;
}

.groups {
    width: 65px;
}

.groups .tools {
    grid-template-columns: 40px 24px;
}

.big {
    display: flex;
    flex-direction: column;
    align-items: center;
    padding-top: 3px;
    white-space: nowrap;
}

.big svg,
.big .letter {
    height: 30px;
    margin-bottom: 3px;
}

.big .letter {
    font-family: "Liberation Sans", Arial, sans-serif;
    font-size: 34px;
    line-height: 26px;
}

.big .arrow {
    margin-top: 3px;
}

.small {
    display: grid;
    grid-auto-rows: 23px;
}

.small button {
    display: flex;
    align-items: center;
    gap: 4px;
    padding-left: 4px;
}

.small .on {
    width: 22px;
    height: 21px;
    padding: 0 2px;
    background: #54759f;
    border: 1px solid #8db3e8;
}

.prop-icons {
    align-items: center;
}

.combo {
    display: flex;
    align-items: center;
    height: 21px;
    padding: 0 2px 0 4px;
    background: linear-gradient(#4c4c4c, #626262);
    border: 1px solid #353535;
    border-bottom-color: #808080;
}

.combo select {
    flex: 1;
    min-width: 0;
}

.combos {
    display: grid;
    gap: 1px;
}

.combos .combo {
    padding-left: 8px;
}

.swatch {
    width: 13px;
    height: 13px;
    margin-right: 4px;
    background: #fff;
    border: 1px solid #222;
}

.combos .swatch {
    width: 15px;
    height: 15px;
    margin: 0 9px 0 4px;
}

.rule {
    width: 56px;
    height: 1px;
    margin-right: 1px;
    background: #e6e6e6;
}

.layer-icons {
    display: grid;
    grid-template-columns: repeat(5, 23px);
    grid-auto-rows: 23px;
    padding-top: 2px;
}

.layer-icons button {
    display: flex;
    align-items: center;
    padding-left: 3px;
}

.folded {
    width: 56px;
    height: 91px;
    margin-left: 1px;
    padding: 5px 0 5px;
    display: flex;
    flex-direction: column;
    align-items: center;
    background: linear-gradient(#686868, #505050);
    border: 1px solid #303030;
}

.folded svg {
    margin-bottom: 3px;
}

.folded .arrow {
    margin-top: auto;
}

/* drawing tabs */
.doc-tabs {
    display: flex;
    align-items: flex-end;
    height: 27px;
    padding: 0 0 0 14px;
    border-bottom: 4px solid #5e5e5e;
    background: #3a3a3a;
    color: #b9b9b9;
}

.doc-tab {
    width: 119px;
    height: 20px;
    padding: 3px 14px 0 13px;
    display: flex;
    justify-content: space-between;
    background: #515151;
    clip-path: polygon(0 100%, 6px 4px, 10px 0, calc(100% - 10px) 0, calc(100% - 6px) 4px, 100% 100%);
}

.doc-tab.current {
    padding-left: 10px;
    background: linear-gradient(#7d7d7d, #5e5e5e);
    color: #fff;
}

.doc-tab svg {
    margin-top: 4px;
}

.add {
    width: 20px;
    height: 15px;
    margin: 0 0 2px 4px;
    border-radius: 4px 8px 2px 6px;
    background: #575757;
    font-size: 15px;
    line-height: 14px;
    font-weight: 700;
}

/* drawing area */
.canvas {
    flex: 1;
    min-height: 0;
    position: relative;
    background: #020203;
    overflow: hidden;
}

.drawing {
    width: 100%;
    height: 100%;
}

.shape {
    fill: none;
    stroke: #a9c9ff;
    stroke-width: 1.5;
    filter: drop-shadow(0 0 1px #2f6ff0) drop-shadow(0 0 1px #2f6ff0);
}

.pick {
    fill: none;
    stroke: #d5e2ff;
}

.forbid {
    fill: #222;
    stroke: #f6f3d8;
    stroke-width: 1.3;
}

.ucs {
    fill: none;
    stroke: #c8c8c8;
    stroke-width: 1.2;
}

.sketch {
    position: absolute;
    left: 14px;
    top: 105px;
    width: 292px;
    height: 268px;
    background: #fff;
}

.outline {
    fill: none;
    stroke: #555;
    stroke-width: 2;
}

.dims {
    fill: none;
    stroke: #74bf74;
    stroke-width: 2;
}

.heads {
    fill: #149b14;
}

.labels {
    fill: #0f980f;
    font-family: "Liberation Sans", Arial, sans-serif;
    font-size: 32px;
    text-anchor: middle;
}

.prompt {
    position: absolute;
    left: 693px;
    top: 176px;
    width: 266px;
    height: 20px;
    padding: 0 3px 2px;
    display: flex;
    align-items: center;
    justify-content: space-between;
    background: #8d8d8d;
    border: 1px solid #a6a6a6;
    color: #111;
    white-space: nowrap;
}

.viewcube {
    position: absolute;
    right: 21px;
    top: 15px;
    width: 80px;
    height: 80px;
    display: grid;
    place-items: center;
    border: 8px solid #333;
    border-radius: 50%;
    font: 700 14px/14px "Liberation Sans", Arial, sans-serif;
    color: #b5b5b5;
}

.viewcube .top {
    width: 33px;
    height: 33px;
    background: #a6a7ae;
    border: 6px solid #b9b9b9;
    color: #3c4250;
    font-size: 9px;
    display: grid;
    place-items: center;
}

.viewcube span {
    position: absolute;
}

.north {
    top: -12px;
}

.south {
    bottom: -12px;
}

.west {
    left: -12px;
}

.east {
    right: -12px;
}

.wcs {
    position: absolute;
    right: 39px;
    top: 113px;
    width: 45px;
    height: 16px;
    padding: 0 4px;
    display: flex;
    align-items: center;
    justify-content: space-between;
    border: 1px solid #a0a0ab;
    border-radius: 4px;
    background: #85858f;
    color: #4c4c57;
}

.navbar {
    position: absolute;
    right: 9px;
    top: 153px;
    border-radius: 4px;
    background: #484848;
}

.scrollbar {
    position: absolute;
    right: 0;
    top: 0;
    bottom: 0;
    width: 5px;
    background: linear-gradient(#cfe0f2 85px, #a4bfdd 85px);
}

.command {
    position: absolute;
    left: 315px;
    bottom: 0;
    width: 651px;
    font-family: "DejaVu Sans Mono", monospace;
}

.history {
    display: flex;
    flex-direction: column;
    align-items: flex-start;
    gap: 4px;
    padding: 0 0 2px 56px;
}

.history p {
    margin: 0;
    padding: 0 1px;
    height: 15px;
    line-height: 16px;
    border-radius: 2px;
    background: #606060;
    color: #f0f0f0;
}

.history .old {
    background: #3f3f3f;
    color: #969696;
}

.history .mid {
    background: #4c4c4c;
    color: #bdbdbd;
}

.cmdline {
    display: flex;
    align-items: center;
    height: 25px;
    padding-right: 4px;
    background: #fff;
    color: #222;
}

.grip {
    display: flex;
    align-items: center;
    align-self: stretch;
    gap: 6px;
    width: 50px;
    padding-left: 3px;
    background: linear-gradient(#8a8a8a, #4c4c4c);
}

.grip button + button {
    margin-left: 3px;
}

.cmd-icon {
    margin: 0 7px;
}

.options {
    display: flex;
    gap: 3px;
    padding-left: 1px;
}

.options button {
    height: 16px;
    padding: 0 1px;
    border-radius: 2px;
    background: #d0d0d0;
}

.options b {
    font-weight: 400;
    color: #1a1ae0;
}

.cmdline input {
    flex: 1;
    min-width: 0;
}

/* layouts and status bar */
.bottombar {
    display: flex;
    justify-content: space-between;
    height: 28px;
    background: #3b3b3b;
    border-top: 1px solid #666;
}

.layouts {
    display: flex;
    align-items: flex-start;
    padding-left: 9px;
    color: #a9a9a9;
}

.layouts a,
.layouts button {
    height: 17px;
    padding: 1px 9px 0;
    background: #505050;
    clip-path: polygon(0 0, 100% 0, calc(100% - 7px) 100%, 7px 100%);
}

.layouts .current {
    background: #747474;
    color: #fff;
    font-weight: 700;
}

.layouts button {
    font-size: 15px;
    line-height: 14px;
}

.status {
    display: flex;
    height: 26px;
    background: #505050;
    border-top: 1px solid #6a6a6a;
    border-bottom: 1px solid #6a6a6a;
}

.status button {
    width: 24px;
    display: flex;
    align-items: center;
    justify-content: center;
}

.status .model {
    width: 48px;
    border-left: 1px solid #777;
    color: #fff;
}

.status .first {
    border-left: 1px solid #777;
}

.status .s {
    width: 22px;
}

.status .l {
    width: 28px;
}

.status .drop {
    width: 14px;
}

.status .scale {
    width: 30px;
    gap: 1px;
}

.units {
    display: flex;
    align-items: center;
    width: 66px;
    padding: 0 3px 0 2px;
    color: #fff;
}

.units select {
    flex: 1;
    min-width: 0;
}

/* taskbar */
.taskbar {
    display: flex;
    height: 36px;
    background: #02060c;
    border-bottom: 2px solid #000;
}

.taskbar > button {
    width: 46px;
    display: flex;
    align-items: center;
    justify-content: center;
}

.taskbar .start {
    width: 42px;
}

.taskbar .running {
    background: #33363d;
}

.ps {
    width: 20px;
    height: 18px;
    background: #0b0f4e;
    border: 1px solid #88b4ea;
    color: #a9cbff;
    font-weight: 700;
    line-height: 16px;
}

.tray {
    margin-left: auto;
    display: flex;
    align-items: center;
    color: #fff;
}

.tray button {
    width: 23px;
    display: flex;
    justify-content: center;
}

.tray .clock {
    display: block;
    width: 60px;
    text-align: center;
    line-height: 17px;
}

.tray .notify {
    width: 48px;
    padding-right: 10px;
}
```
